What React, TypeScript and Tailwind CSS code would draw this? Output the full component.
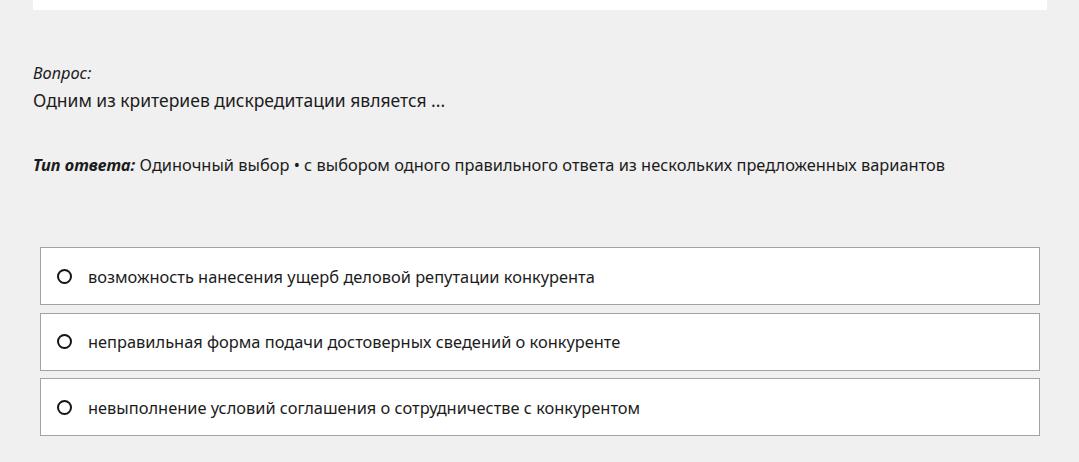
import React from 'react';

const OPTIONS = [
  'возможность нанесения ущерб деловой репутации конкурента',
  'неправильная форма подачи достоверных сведений о конкуренте',
  'невыполнение условий соглашения о сотрудничестве с конкурентом',
];

const Radio = () => (
  <span className="w-[15px] h-[15px] rounded-full border-[2.5px] border-[#151515] bg-white shrink-0" />
);

export default function App() {
  return (
    <div className="min-h-screen w-[1079px] h-[462px] overflow-hidden bg-[#f0f0f0] font-['Noto_Sans','Open_Sans',sans-serif] text-[#1c1c1c]">
      <div className="ml-[33px] mr-[32px] h-[10px] bg-white" />

      <div className="px-[33px] pt-[51px]">
        <p className="text-[16.4px] italic leading-[24px]">Вопрос:</p>
        <p className="text-[17.5px] leading-[30px]">Одним из критериев дискредитации является ...</p>

        <p className="mt-[38px] text-[16.4px] leading-[24px]">
          <span className="font-bold italic">Тип ответа:</span> Одиночный выбор • с выбором одного правильного ответа из нескольких предложенных вариантов
        </p>
      </div>

      <div className="mt-[70px] mx-[40px] w-[1000px] flex flex-col gap-[7.5px]">
        {OPTIONS.map((o) => (
          <label
            key={o}
            className="h-[58px] bg-white border border-[#a3a3a3] flex items-center gap-[16px] pl-[16px] text-[16.4px]"
          >
            <Radio />
            <span className="pt-[2px]">{o}</span>
          </label>
        ))}
      </div>
    </div>
  );
}
